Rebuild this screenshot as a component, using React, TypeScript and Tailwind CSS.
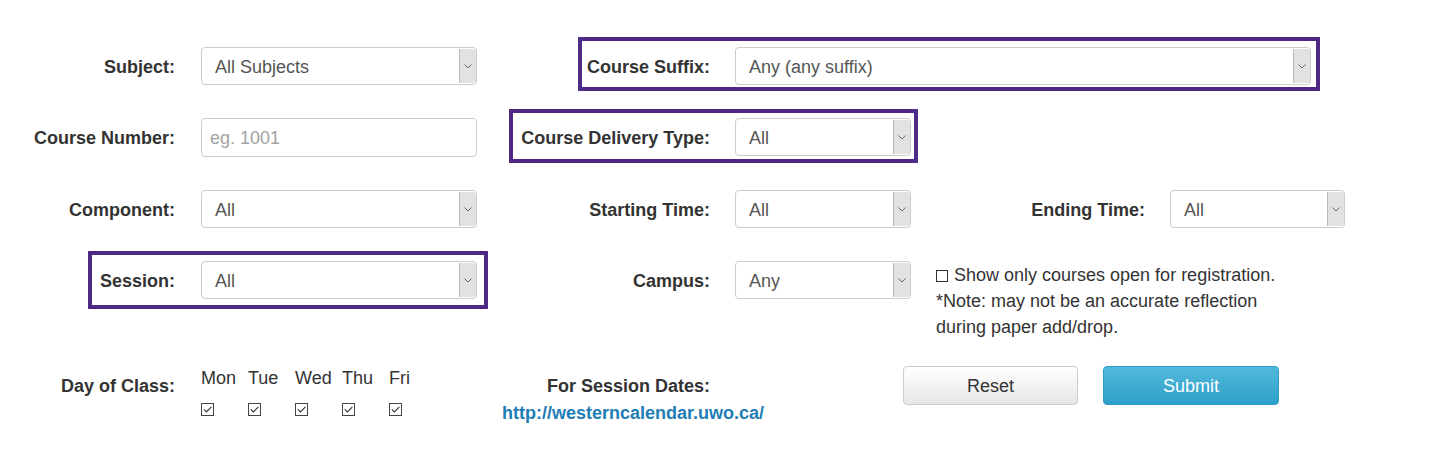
import React from 'react'

const font = { fontFamily: '"Liberation Sans", Arial, sans-serif' }

function Chevron() {
  return (
    <svg width="8" height="5" viewBox="0 0 8 5" fill="none">
      <path d="M0.5 0.5L4 4L7.5 0.5" stroke="#666" strokeWidth="1" />
    </svg>
  )
}

function Select({ value, width }: { value: string; width: string }) {
  return (
    <div
      className={`${width} flex h-[38px] shrink-0 items-center rounded-[4px] border border-[#ccc] bg-white pl-[13px] text-[18px] text-[#555]`}
    >
      <span className="truncate pt-[2px]">{value}</span>
      <div className="my-[1px] ml-auto flex w-[17px] self-stretch items-center justify-center rounded-r-[3px] border-l border-[#b9b9b9] bg-[#e2e2e2]">
        <Chevron />
      </div>
    </div>
  )
}

function Label({ children }: { children: React.ReactNode }) {
  return (
    <span className="whitespace-nowrap pt-[2px] text-[18px] font-bold text-[#333]">
      {children}
    </span>
  )
}

function Frame({ className }: { className: string }) {
  return (
    <div
      className={`pointer-events-none absolute border-4 border-[#4e2a84] ${className}`}
    />
  )
}

function DayBox() {
  return (
    <span className="flex h-[13px] w-[13px] items-center justify-center border border-[#444] bg-white">
      <svg width="9" height="7" viewBox="0 0 9 7" fill="none">
        <path d="M0.8 3.4L3.4 5.9L8.4 0.8" stroke="#333" strokeWidth="1.1" />
      </svg>
    </span>
  )
}

const days = ['Mon', 'Tue', 'Wed', 'Thu', 'Fri']

export default function App() {
  return (
    <div
      className="h-[452px] w-[1444px] overflow-hidden bg-white pt-[47px]"
      style={font}
    >
      {/* row 1 */}
      <div className="flex h-[38px] items-center">
        <div className="flex w-[477px] justify-end">
          <div className="flex items-center gap-[26px]">
            <Label>Subject:</Label>
            <Select value="All Subjects" width="w-[276px]" />
          </div>
        </div>
        <div className="flex w-[834px] justify-end">
          <div className="relative flex items-center gap-[25px]">
            <Frame className="-top-[10px] -bottom-[6px] -left-[9px] -right-[9px]" />
            <Label>Course Suffix:</Label>
            <Select value="Any (any suffix)" width="w-[576px]" />
          </div>
        </div>
      </div>

      {/* row 2 */}
      <div className="mt-[33px] flex h-[38px] items-center">
        <div className="flex w-[477px] justify-end">
          <div className="flex items-center gap-[26px]">
            <Label>Course Number:</Label>
            <input
              placeholder="eg. 1001"
              className="h-[39px] w-[276px] rounded-[4px] border border-[#ccc] bg-white pl-[8px] pt-[2px] text-[18px] text-[#555] outline-none placeholder:text-[#a3a3a3]"
              style={font}
            />
          </div>
        </div>
        <div className="flex w-[434px] justify-end">
          <div className="relative flex items-center gap-[25px]">
            <Frame className="-top-[9px] -bottom-[7px] -left-[12px] -right-[7px]" />
            <Label>Course Delivery Type:</Label>
            <Select value="All" width="w-[176px]" />
          </div>
        </div>
      </div>

      {/* row 3 */}
      <div className="mt-[34px] flex h-[38px] items-center">
        <div className="flex w-[477px] justify-end">
          <div className="flex items-center gap-[26px]">
            <Label>Component:</Label>
            <Select value="All" width="w-[276px]" />
          </div>
        </div>
        <div className="flex w-[434px] justify-end">
          <div className="flex items-center gap-[25px]">
            <Label>Starting Time:</Label>
            <Select value="All" width="w-[176px]" />
          </div>
        </div>
        <div className="flex w-[434px] justify-end">
          <div className="flex items-center gap-[25px]">
            <Label>Ending Time:</Label>
            <Select value="All" width="w-[175px]" />
          </div>
        </div>
      </div>

      {/* row 4 */}
      <div className="mt-[33px] flex items-start">
        <div className="flex h-[38px] w-[477px] justify-end">
          <div className="relative flex items-center gap-[26px]">
            <Frame className="-top-[10px] -bottom-[10px] -left-[12px] -right-[11px]" />
            <Label>Session:</Label>
            <Select value="All" width="w-[276px]" />
          </div>
        </div>
        <div className="flex h-[38px] w-[434px] justify-end">
          <div className="flex items-center gap-[25px]">
            <Label>Campus:</Label>
            <Select value="Any" width="w-[176px]" />
          </div>
        </div>
        <div className="ml-[25px] pt-[1px] text-[18px] leading-[26px] text-[#333]">
          <div>
            <span className="mr-[6px] inline-block h-[12px] w-[12px] border border-[#333] align-[-1px]" />
            Show only courses open for registration.
          </div>
          <div>*Note: may not be an accurate reflection</div>
          <div>during paper add/drop.</div>
        </div>
      </div>

      {/* row 5 */}
      <div className="mt-[26px] flex items-start">
        <div className="flex w-[477px] items-start">
          <div className="mt-[7px] w-[175px] text-right">
            <Label>Day of Class:</Label>
          </div>
          <div className="ml-[26px] flex pt-[2px]">
            {days.map((d) => (
              <div key={d} className="flex w-[47px] flex-col items-start">
                <span className="text-[18px] leading-[20px] text-[#333]">{d}</span>
                <span className="mt-[15px]">
                  <DayBox />
                </span>
              </div>
            ))}
          </div>
        </div>
        <div className="w-[426px] pt-[7px] leading-[26px]">
          <div className="w-[233px] text-right">
            <Label>For Session Dates:</Label>
          </div>
          <a
            href="#"
            className="block pl-[25px] text-[18px] font-bold text-[#1f7db5]"
          >
            http://westerncalendar.uwo.ca/
          </a>
        </div>
        <div className="flex gap-[25px]">
          <button
            className="h-[39px] w-[175px] rounded-[4px] border border-[#ccc] bg-gradient-to-b from-white to-[#e6e6e6] pt-[2px] text-[18px] text-[#333]"
            style={font}
          >
            Reset
          </button>
          <button
            className="h-[39px] w-[176px] rounded-[4px] border border-[#2b9cc5] bg-gradient-to-b from-[#52b9dc] to-[#2d9fc9] pt-[2px] text-[18px] text-white"
            style={font}
          >
            Submit
          </button>
        </div>
      </div>
    </div>
  )
}
